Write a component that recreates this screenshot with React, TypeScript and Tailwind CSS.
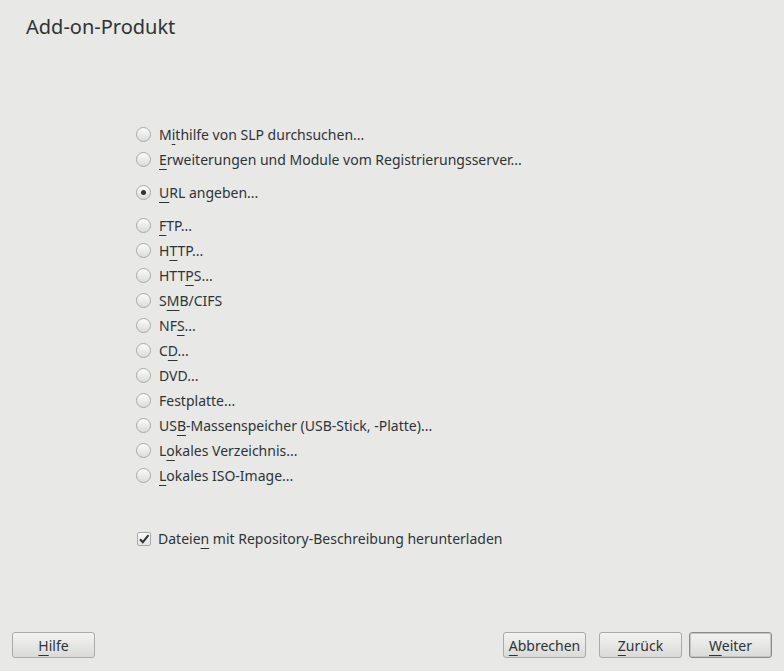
import React from "react";

type Opt = { pre: string; key: string; post: string; checked?: boolean };

const topGroup: Opt[] = [
  { pre: "M", key: "i", post: "thilfe von SLP durchsuchen..." },
  { pre: "", key: "E", post: "rweiterungen und Module vom Registrierungsserver..." },
];

const urlOpt: Opt = { pre: "", key: "U", post: "RL angeben...", checked: true };

const sources: Opt[] = [
  { pre: "", key: "F", post: "TP..." },
  { pre: "H", key: "T", post: "TP..." },
  { pre: "HTT", key: "P", post: "S..." },
  { pre: "S", key: "M", post: "B/CIFS" },
  { pre: "NF", key: "S", post: "..." },
  { pre: "C", key: "D", post: "..." },
  { pre: "DVD...", key: "", post: "" },
  { pre: "Festplatte...", key: "", post: "" },
  { pre: "US", key: "B", post: "-Massenspeicher (USB-Stick, -Platte)..." },
  { pre: "L", key: "o", post: "kales Verzeichnis..." },
  { pre: "", key: "L", post: "okales ISO-Image..." },
];

function Label({ o }: { o: Opt }) {
  return (
    <span>
      {o.pre}
      {o.key && <span className="underline decoration-1 underline-offset-[4px]">{o.key}</span>}
      {o.post}
    </span>
  );
}

function Radio({ o }: { o: Opt }) {
  return (
    <div className="flex h-[25px] items-center gap-[8px]">
      <span className="flex h-[15px] w-[15px] items-center justify-center rounded-full border border-[#a9a9a7] bg-gradient-to-b from-[#fbfbfb] to-[#dcdcdb]">
        {o.checked && <span className="h-[5px] w-[5px] rounded-full bg-[#2e3436]" />}
      </span>
      <Label o={o} />
    </div>
  );
}

function Btn({ pre, k, post, main }: { pre: string; k: string; post: string; main?: boolean }) {
  return (
    <button
      className={
        "h-[26px] w-[83px] rounded-[3px] border bg-gradient-to-b from-[#f3f3f2] to-[#dadad9] text-[14px] text-[#2e3436] " +
        (main ? "border-[#8c8c8b] shadow-[inset_0_0_0_1px_#c4c4c3]" : "border-[#aaaaa9]")
      }
    >
      {pre}
      <span className="underline decoration-1 underline-offset-[4px]">{k}</span>
      {post}
    </button>
  );
}

export default function App() {
  return (
    <div
      className="flex h-[671px] w-[784px] flex-col bg-[#e8e8e7] text-[14px] text-[#2e3436]"
      style={{ fontFamily: '"Noto Sans", "DejaVu Sans", sans-serif' }}
    >
      <h1 className="pl-[26px] pt-[13px] text-[20px] leading-[28px] text-[#2e3436]">Add-on-Produkt</h1>

      <div className="ml-[136px] mt-[81px] flex flex-col">
        <div className="flex flex-col">
          {topGroup.map((o) => (
            <Radio key={o.post} o={o} />
          ))}
        </div>
        <div className="mt-[8px]">
          <Radio o={urlOpt} />
        </div>
        <div className="mt-[8px] flex flex-col">
          {sources.map((o) => (
            <Radio key={o.pre + o.post} o={o} />
          ))}
        </div>

        <div className="mt-[38px] flex h-[25px] items-center gap-[7px] pl-[1px]">
          <span className="flex h-[14px] w-[14px] items-center justify-center rounded-[2px] border border-[#a9a9a7] bg-gradient-to-b from-[#fbfbfb] to-[#e2e2e2]">
            <svg width="12" height="12" viewBox="0 0 12 12">
              <path d="M2 6.3 L4.8 9.2 L10.5 2.2" fill="none" stroke="#2e3436" strokeWidth="2" />
            </svg>
          </span>
          <span>
            Dateie<span className="underline decoration-1 underline-offset-[4px]">n</span> mit Repository-Beschreibung herunterladen
          </span>
        </div>
      </div>

      <div className="mt-auto flex items-center px-[12px] pb-[13px]">
        <Btn pre="" k="H" post="ilfe" />
        <div className="ml-auto flex gap-[13px]">
          <Btn pre="" k="A" post="bbrechen" />
          <div className="flex gap-[7px]">
            <Btn pre="" k="Z" post="urück" />
            <Btn pre="" k="W" post="eiter" main />
          </div>
        </div>
      </div>
    </div>
  );
}
